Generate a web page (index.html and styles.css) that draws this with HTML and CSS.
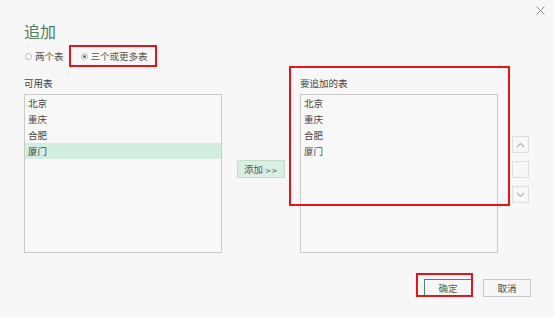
FILE: index.html
```html
<!DOCTYPE html>
<html lang="zh-CN">
<head>
<meta charset="utf-8">
<title>追加</title>
<link rel="stylesheet" href="styles.css">
</head>
<body>
<div class="dialog">
  <button class="close" aria-label="关闭">
    <svg width="9" height="9" viewBox="0 0 9 9"><path d="M0.5 0.5 L8.5 8.5 M8.5 0.5 L0.5 8.5" stroke="#8a8a8a" stroke-width="1" fill="none"/></svg>
  </button>
  <h1 class="title">追加</h1>
  <div class="mode-row">
    <label class="radio"><span class="dot"></span>两个表</label>
    <label class="radio radio-marked"><span class="dot dot-on"></span>三个或更多表</label>
  </div>
  <div class="panes">
    <div class="pane">
      <div class="pane-label">可用表</div>
      <ul class="list">
        <li>北京</li>
        <li>重庆</li>
        <li>合肥</li>
        <li class="selected">厦门</li>
      </ul>
    </div>
    <div class="middle">
      <button class="add-btn">添加 <span class="gt">&gt;&gt;</span></button>
    </div>
    <div class="pane pane-marked">
      <div class="pane-label">要追加的表</div>
      <ul class="list">
        <li>北京</li>
        <li>重庆</li>
        <li>合肥</li>
        <li>厦门</li>
      </ul>
      <span class="mark mark-pane"></span>
    </div>
    <div class="arrows">
      <button class="arrow-btn"><svg width="9" height="6" viewBox="0 0 9 6"><path d="M1 5 L4.5 1.5 L8 5" stroke="#b5b5b5" fill="none" stroke-width="1.2"/></svg></button>
      <button class="arrow-btn"></button>
      <button class="arrow-btn"><svg width="9" height="6" viewBox="0 0 9 6"><path d="M1 1 L4.5 4.5 L8 1" stroke="#b5b5b5" fill="none" stroke-width="1.2"/></svg></button>
    </div>
  </div>
  <div class="footer">
    <span class="ok-wrap">
      <button class="btn btn-ok">确定</button>
      <span class="mark mark-ok"></span>
    </span>
    <button class="btn">取消</button>
  </div>
</div>
</body>
</html>
```

FILE: styles.css
```css
html, body {
  margin: 0;
  padding: 0;
}
body {
  width: 554px;
  height: 317px;
  background: #f7f7f7;
  font-family: "Noto Sans CJK SC", "Noto Sans", sans-serif;
  color: #444;
  overflow: hidden;
}
.dialog {
  position: relative;
  box-sizing: border-box;
  height: 317px;
  padding: 22px 23px 0 24px;
  display: flex;
  flex-direction: column;
}
.close {
  position: absolute;
  top: 6px;
  right: 9px;
  width: 9px;
  height: 9px;
  padding: 0;
  border: 0;
  background: none;
  display: flex;
}
.title {
  margin: 0;
  font-size: 16px;
  line-height: 18px;
  font-weight: normal;
  color: #4e7f60;
}
.mode-row {
  margin-top: 5px;
  display: flex;
  align-items: center;
  height: 22px;
}
.radio {
  display: flex;
  align-items: center;
  font-size: 9.5px;
  line-height: 12px;
  color: #555;
}
.dot {
  box-sizing: border-box;
  width: 7px;
  height: 7px;
  border: 1px solid #b8b8b8;
  border-radius: 50%;
  margin: 0 3px 0 1px;
  background: #fff;
  display: flex;
  align-items: center;
  justify-content: center;
}
.dot-on::after {
  content: "";
  width: 3px;
  height: 3px;
  border-radius: 50%;
  background: #666;
}
.radio-marked {
  box-sizing: border-box;
  height: 22px;
  margin-left: 5px;
  padding: 0 7px 0 9px;
  border: 2px solid #e3161e;
}
.panes {
  margin-top: 10px;
  display: flex;
  align-items: flex-start;
}
.pane {
  width: 198px;
  display: flex;
  flex-direction: column;
}
.pane-marked {
  position: relative;
}
.pane-label {
  font-size: 9.5px;
  line-height: 12px;
  height: 12px;
  color: #444;
  margin-bottom: 5px;
}
.list {
  list-style: none;
  margin: 0;
  padding: 0;
  box-sizing: border-box;
  height: 159px;
  border: 1px solid #cbcbcb;
  background: #f8f8f8;
}
.list li {
  height: 16px;
  line-height: 16px;
  padding-left: 3px;
  font-size: 9.5px;
  color: #444;
}
.list li.selected {
  background: #d4ede1;
}
.middle {
  width: 78px;
  padding-top: 83px;
  display: flex;
  justify-content: center;
}
.add-btn {
  box-sizing: border-box;
  width: 48px;
  height: 18px;
  padding: 0;
  border: 1px solid #c2ddcd;
  background: #d9efe3;
  font-family: inherit;
  font-size: 9.5px;
  color: #555;
  line-height: 16px;
}
.add-btn .gt {
  font-family: "DejaVu Sans", sans-serif;
  font-size: 7px;
  letter-spacing: 0.5px;
}
.arrows {
  margin-left: 14px;
  padding-top: 59px;
  display: flex;
  flex-direction: column;
  gap: 8px;
}
.arrow-btn {
  box-sizing: border-box;
  width: 17px;
  height: 17px;
  padding: 0;
  border: 1px solid #dedede;
  background: #f7f7f7;
  display: flex;
  align-items: center;
  justify-content: center;
}
.mark {
  position: absolute;
  box-sizing: border-box;
  border: 2px solid #e3161e;
  pointer-events: none;
}
.mark-pane {
  left: -11px;
  top: -11px;
  width: 221px;
  height: 140px;
}
.footer {
  margin-top: 26px;
  display: flex;
  justify-content: flex-end;
  gap: 11px;
}
.ok-wrap {
  position: relative;
  display: flex;
}
.mark-ok {
  left: -8px;
  top: -6px;
  width: 57px;
  height: 24px;
}
.btn {
  box-sizing: border-box;
  width: 48px;
  height: 18px;
  padding: 0;
  border: 1px solid #c9c9c9;
  background: #f7f7f7;
  font-family: inherit;
  font-size: 9.5px;
  line-height: 16px;
  color: #444;
}
.btn-ok {
  border-color: #4a8a63;
  color: #3f6f52;
}
```
